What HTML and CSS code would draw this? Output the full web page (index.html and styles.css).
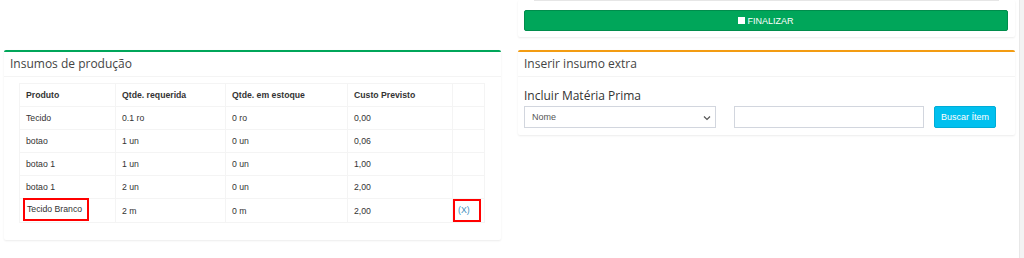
FILE: index.html
```html
<!DOCTYPE html>
<html lang="pt">
<head>
<meta charset="utf-8">
<link rel="stylesheet" href="styles.css">
</head>
<body>
<div class="page">
  <div class="col-left">
    <div class="spacer-left"></div>
    <div class="box box-success">
      <div class="box-header">Insumos de produção</div>
      <div class="box-body">
        <table class="tbl">
          <thead>
            <tr><th class="c1">Produto</th><th class="c2">Qtde. requerida</th><th class="c3">Qtde. em estoque</th><th class="c4">Custo Previsto</th><th class="c5"></th></tr>
          </thead>
          <tbody>
            <tr><td>Tecido</td><td>0.1 ro</td><td>0 ro</td><td>0,00</td><td></td></tr>
            <tr><td>botao</td><td>1 un</td><td>0 un</td><td>0,06</td><td></td></tr>
            <tr><td>botao 1</td><td>1 un</td><td>0 un</td><td>1,00</td><td></td></tr>
            <tr><td>botao 1</td><td>2 un</td><td>0 un</td><td>2,00</td><td></td></tr>
            <tr class="last"><td class="hl-cell"><span class="hl hl-name">Tecido Branco</span></td><td>2 m</td><td>0 m</td><td>2,00</td><td class="hl-cell"><span class="hl hl-x"><a class="rm">(X)</a></span></td></tr>
          </tbody>
        </table>
      </div>
    </div>
  </div>
  <div class="col-right">
    <div class="box box-top">
      <div class="input-edge"></div>
      <button class="btn-finalizar"><span class="sq"></span>FINALIZAR</button>
    </div>
    <div class="box box-warning">
      <div class="box-header">Inserir insumo extra</div>
      <div class="box-body2">
        <div class="label">Incluir Matéria Prima</div>
        <div class="form-row">
          <div class="select">Nome<svg class="chev" width="8" height="6" viewBox="0 0 8 6"><path d="M1 1.5 L4 4.5 L7 1.5" fill="none" stroke="#555" stroke-width="1.2"/></svg></div>
          <div class="input"></div>
          <button class="btn-buscar">Buscar Ítem</button>
        </div>
      </div>
    </div>
  </div>
  <div class="scroll-strip"></div>
</div>
</body>
</html>
```

FILE: styles.css
```css
* { box-sizing: border-box; }
html, body { margin: 0; padding: 0; background: #fff; }
body { width: 1024px; height: 258px; overflow: hidden; font-family: "Liberation Sans", Arial, sans-serif; color: #333; }

.page { display: flex; align-items: flex-start; padding-left: 4px; height: 258px; }
.col-left { width: 497px; display: flex; flex-direction: column; }
.spacer-left { height: 50px; }
.col-right { width: 497px; margin-left: 17px; display: flex; flex-direction: column; }
.scroll-strip { margin-left: auto; width: 5px; height: 258px; background: #f3f3f3; border-left: 1px solid #e8e8e8; }

.box { background: #fff; box-shadow: 0 1px 2px rgba(0,0,0,0.08); border-radius: 2px; }
.box-success { border-top: 2px solid #00a65a; }
.box-warning { border-top: 2px solid #f39c12; margin-top: 13px; }

.box-header { height: 25px; padding: 3px 6px 0; border-bottom: 1px solid #f4f4f4; font-family: "Open Sans", "DejaVu Sans", sans-serif; font-size: 12px; color: #444; line-height: 17px; }

.box-body { padding: 6px 16px 17px 15px; }
.tbl { border-collapse: collapse; width: 465px; font-size: 8.7px; table-layout: fixed; }
.tbl th, .tbl td { border: 1px solid #f4f4f4; height: 23px; padding: 0 6px; text-align: left; vertical-align: middle; }
.tbl th { font-weight: bold; color: #333; }
.tbl td { color: #333; }
.c1 { width: 96px; } .c2 { width: 110px; } .c3 { width: 122px; } .c4 { width: 105px; } .c5 { width: 32px; }
.tbl tr.last td { height: 22px; }
.tbl td.hl-cell { padding: 0; }
.hl { display: inline-block; border: 2px solid #f00; height: 23px; line-height: 18px; vertical-align: middle; margin: -2px 0 0; }
.hl-name { margin-left: 3px; padding: 0 5px 0 2px; }
.hl-x { padding: 0 9px 0 3px; margin-top: 0; }
.rm { color: #3c8dbc; }

.box-top { height: 37px; position: relative; padding: 10px 7px 0 6px; }
.input-edge { position: absolute; left: 16px; right: 16px; top: -1px; height: 2px; border-bottom: 1px solid #e6e6e6; }
.btn-finalizar { display: flex; align-items: center; justify-content: center; width: 100%; height: 21px; background: #00a65a; border: 1px solid #008d4c; border-radius: 2px; color: #fff; font-family: "Liberation Sans", Arial, sans-serif; font-size: 9px; padding: 0; }
.sq { display: inline-block; width: 7px; height: 7px; background: #fff; margin-right: 2px; }

.box-body2 { padding: 10px 6px 7px 6px; }
.label { font-family: "Open Sans", "DejaVu Sans", sans-serif; font-size: 12px; color: #333; line-height: 17px; height: 19px; }
.form-row { display: flex; align-items: center; }
.select { width: 192px; height: 22px; border: 1px solid #d2d6de; font-size: 9px; color: #555; padding: 0 4px 0 7px; display: flex; align-items: center; justify-content: space-between; }
.chev { margin-top: 1px; }
.input { width: 190px; height: 22px; border: 1px solid #d2d6de; margin-left: 18px; }
.btn-buscar { margin-left: 10px; width: 62px; height: 22px; background: #00c0ef; border: 1px solid #00acd6; border-radius: 2px; color: #fff; font-family: "Liberation Sans", Arial, sans-serif; font-size: 9px; padding: 0; }
```
